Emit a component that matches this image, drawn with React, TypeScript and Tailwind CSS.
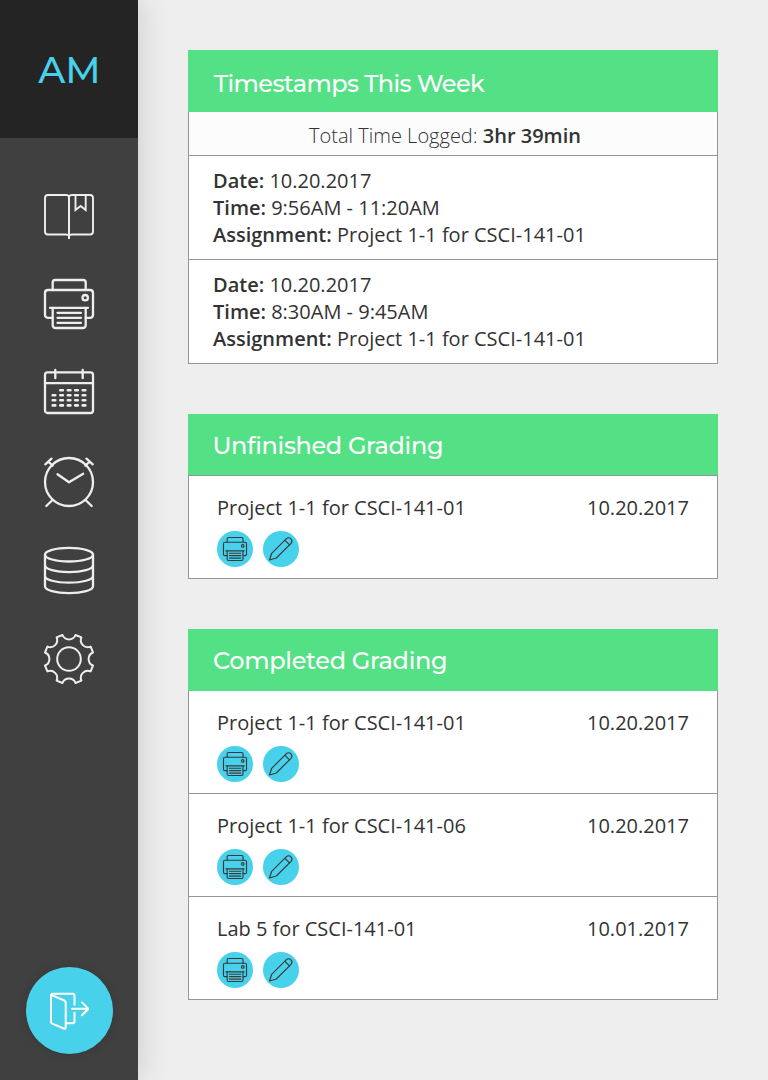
import type { ReactNode } from "react";

function Icon({ children }: { children: ReactNode }) {
  return (
    <svg
      viewBox="0 0 50 50"
      className="block h-[50px] w-[50px] shrink-0 overflow-visible"
      fill="none"
      stroke="currentColor"
      strokeWidth={2.3}
      strokeLinecap="round"
      strokeLinejoin="round"
    >
      {children}
    </svg>
  );
}

function BookIcon() {
  return (
    <Icon>
      <path d="M25 6.500C24.400 5.400 23.500 5 22 5H4Q1 5 1 8v33.500q0 3 3 3h18c1.500 0 2.400.3 3 1.200.6-.9 1.500-1.200 3-1.200h18q3 0 3-3V8q0-3-3-3H28c-1.500 0-2.400.4-3 1.500z" strokeWidth={1.9} />
      <path d="M25 6.500V49" strokeLinecap="butt" strokeWidth={2} />
      <path d="M31.500 5v15l5.100-4 5.100 4V5" strokeWidth={1.9} strokeLinejoin="miter" />
    </Icon>
  );
}

function PrinterShapes() {
  return (
    <>
      <path d="M8.700 11V3.500Q8.700 1 11.200 1h28q2.500 0 2.500 2.500V11" />
      <path d="M8.700 38.800H4q-3 0-3-3V14q0-3 3-3h42q3 0 3 3v21.800q0 3-3 3h-4.300" />
      <path d="M6 28.800h38" />
      <path d="M8.700 28.800V46q0 3 3 3h27q3 0 3-3V28.800" />
      <path d="M13.500 33.800h23.500M13.500 38.800h23.500M13.500 43.900h23.500" />
      <circle cx="41.200" cy="18.700" r="2.700" />
    </>
  );
}

function CalendarIcon() {
  return (
    <Icon>
      <rect x="1" y="4.300" width="48" height="40.700" rx="2.500" />
      <path d="M1 15.200h48M11.300 2v8.200M38.700 2v8.200" />
      <path
        strokeWidth={2.600}
        d="M16.300 22.200h2.600M23.800 22.200h2.600M31.200 22.200h2.600M38.700 22.200h2.600M8.700 27.300h2.600M16.300 27.300h2.600M23.800 27.300h2.600M31.200 27.300h2.600M38.700 27.300h2.600M8.700 32.300h2.600M16.300 32.300h2.600M23.800 32.300h2.600M31.200 32.300h2.600M38.700 32.300h2.600M8.700 37.400h2.600M16.300 37.400h2.600M23.800 37.400h2.600M31.200 37.400h2.600M38.700 37.400h2.600"
      />
    </Icon>
  );
}

function ClockIcon() {
  return (
    <Icon>
      <circle cx="25" cy="25" r="24" />
      <path d="M13.500 17.200 25 25.300l14.200-8.500" />
      <path d="M1.300 7.300 7.500 1.600M4.400 4.500l4.200 4.200M48.700 7.300l-6.200-5.700M45.600 4.500l-4.200 4.200" />
      <path d="M8.500 43 2.300 49M41.500 43l6.200 6" />
    </Icon>
  );
}

function DatabaseIcon() {
  return (
    <Icon>
      <ellipse cx="25" cy="8.700" rx="24" ry="6.800" />
      <path d="M1 8.700V40.300c0 3.900 10.700 6.800 24 6.800s24-2.900 24-6.800V8.700" />
      <path d="M1 19.300c0 3.900 10.700 6.800 24 6.800s24-2.900 24-6.800M1 29.900c0 3.900 10.700 6.800 24 6.800s24-2.900 24-6.800" />
    </Icon>
  );
}

function GearIcon() {
  return (
    <Icon>
      <g transform="translate(25 24)" strokeWidth={2}>
        <circle r="11.800" />
        <path d="M-6.500-24A7 7 0 0 0 6.500-24L12.400-21.600A7 7 0 0 0 21.600-12.400L24-6.500A7 7 0 0 0 24 6.500L21.600 12.400A7 7 0 0 0 12.400 21.600L6.500 24A7 7 0 0 0-6.500 24L-12.400 21.600A7 7 0 0 0-21.600 12.400L-24 6.500A7 7 0 0 0-24-6.500L-21.600-12.400A7 7 0 0 0-12.400-21.600Z" />
      </g>
    </Icon>
  );
}

function ExitIcon() {
  return (
    <svg
      viewBox="0 0 40 40"
      className="h-10 w-10"
      fill="none"
      stroke="currentColor"
      strokeWidth={2}
      strokeLinecap="round"
      strokeLinejoin="round"
    >
      <path d="M2 4.500v26.500q0 1.200 1.200 1.700l11.500 4.800q2 .8 2-1V11.700q0-1.500-1.500-2.200L3.300 4.400Q2 3.800 2 4.500z" />
      <path d="M2 4.500Q2 2.700 3.800 2.700h19.700q2 0 2 2v9M25.500 21.800v8.500q0 2-2 2H17" />
      <path d="M23 17.800h16.500M33 11.400l6.500 6.400-6.500 6.400" />
    </svg>
  );
}

function Actions() {
  return (
    <div className="flex gap-2.5 text-[#3a3a3a]">
      <button className="flex h-9 w-9 items-center justify-center rounded-full bg-[#48d1ea]">
        <svg viewBox="0 0 50 50" className="h-6 w-6 overflow-visible" fill="none" stroke="currentColor" strokeWidth={2.400} strokeLinecap="round" strokeLinejoin="round">
          <PrinterShapes />
        </svg>
      </button>
      <button className="flex h-9 w-9 items-center justify-center rounded-full bg-[#48d1ea]">
        <svg viewBox="0 0 24 24" className="h-6 w-6 overflow-visible" fill="none" stroke="currentColor" strokeWidth={1.150} strokeLinecap="round" strokeLinejoin="round">
          <path d="M.5 23 2.700 16.300 17.400 1.700q2.200-1.900 4.500.1 2.100 2.200.1 4.500L7.300 21Z" />
          <path d="m16 3.300 4.500 4.500" />
        </svg>
      </button>
    </div>
  );
}

function Heading({ children, className }: { children: ReactNode; className: string }) {
  return (
    <h2 className={`flex items-center bg-[#54e186] font-['Montserrat','Inter',sans-serif] text-[24px] font-medium whitespace-nowrap text-white ${className}`}>
      {children}
    </h2>
  );
}

function Timestamp({ date, time, assignment }: { date: string; time: string; assignment: string }) {
  return (
    <div className="h-[104px] border-b border-[#939598] pt-[11px] pl-6 leading-[27px]">
      <p><b className="font-semibold">Date:</b> {date}</p>
      <p><b className="font-semibold">Time:</b> {time}</p>
      <p><b className="font-semibold">Assignment:</b> {assignment}</p>
    </div>
  );
}

function GradingRow({ name, date }: { name: string; date: string }) {
  return (
    <div className="flex h-[103px] flex-col gap-2.5 border-b border-[#939598] pt-[18px] pr-7 pl-7">
      <div className="flex justify-between leading-[27px]">
        <span>{name}</span>
        <span>{date}</span>
      </div>
      <Actions />
    </div>
  );
}

export default function App() {
  return (
    <div className="flex h-[1080px] w-[768px] overflow-hidden bg-[#eeeeee] font-['Open_Sans',sans-serif] text-[20px] text-[#333333]">
      <aside className="flex w-[138px] shrink-0 flex-col items-center bg-[#404040] text-[#eeeeee] shadow-[0_0_30px_rgba(0,0,0,0.16)]">
        <div className="flex h-[138px] w-full items-center justify-center bg-[#242424] pt-0.5 pl-px font-['Montserrat','Inter',sans-serif] text-[37px] font-medium text-[#48d1ea]">
          <span>AM</span>
        </div>
        <nav className="mt-[52px] flex flex-col gap-[39px]">
          <BookIcon />
          <Icon><PrinterShapes /></Icon>
          <CalendarIcon />
          <ClockIcon />
          <DatabaseIcon />
          <GearIcon />
        </nav>
        <button className="mt-auto mb-[26px] flex h-[87px] w-[87px] items-center justify-center rounded-full bg-[#48d1ea] text-white shadow-[0_0_10px_rgba(0,0,0,0.15)]">
          <ExitIcon />
        </button>
      </aside>
      <main className="flex w-[630px] flex-col gap-[50px] p-[50px]">
        <section>
          <Heading className="h-[62px] pt-1.5 pl-[26px] tracking-[-0.61px]">Timestamps This Week</Heading>
          <div className="border-x border-[#939598] bg-white">
            <div className="h-11 border-b border-[#939598] bg-[#fcfcfc] pt-2.5 pr-4 text-center leading-[27px] font-light">
              Total Time Logged: <b className="font-semibold">3hr 39min</b>
            </div>
            <Timestamp date="10.20.2017" time="9:56AM - 11:20AM" assignment="Project 1-1 for CSCI-141-01" />
            <Timestamp date="10.20.2017" time="8:30AM - 9:45AM" assignment="Project 1-1 for CSCI-141-01" />
          </div>
        </section>
        <section>
          <Heading className="h-[61px] pt-0.5 pl-[24.5px] tracking-[-0.36px]">Unfinished Grading</Heading>
          <div className="border-x border-t border-[#939598] bg-white">
            <GradingRow name="Project 1-1 for CSCI-141-01" date="10.20.2017" />
          </div>
        </section>
        <section>
          <Heading className="h-[62px] pt-0.5 pl-[25px] tracking-[-0.31px]">Completed Grading</Heading>
          <div className="border-x border-[#939598] bg-white">
            <GradingRow name="Project 1-1 for CSCI-141-01" date="10.20.2017" />
            <GradingRow name="Project 1-1 for CSCI-141-06" date="10.20.2017" />
            <GradingRow name="Lab 5 for CSCI-141-01" date="10.01.2017" />
          </div>
        </section>
      </main>
    </div>
  );
}
